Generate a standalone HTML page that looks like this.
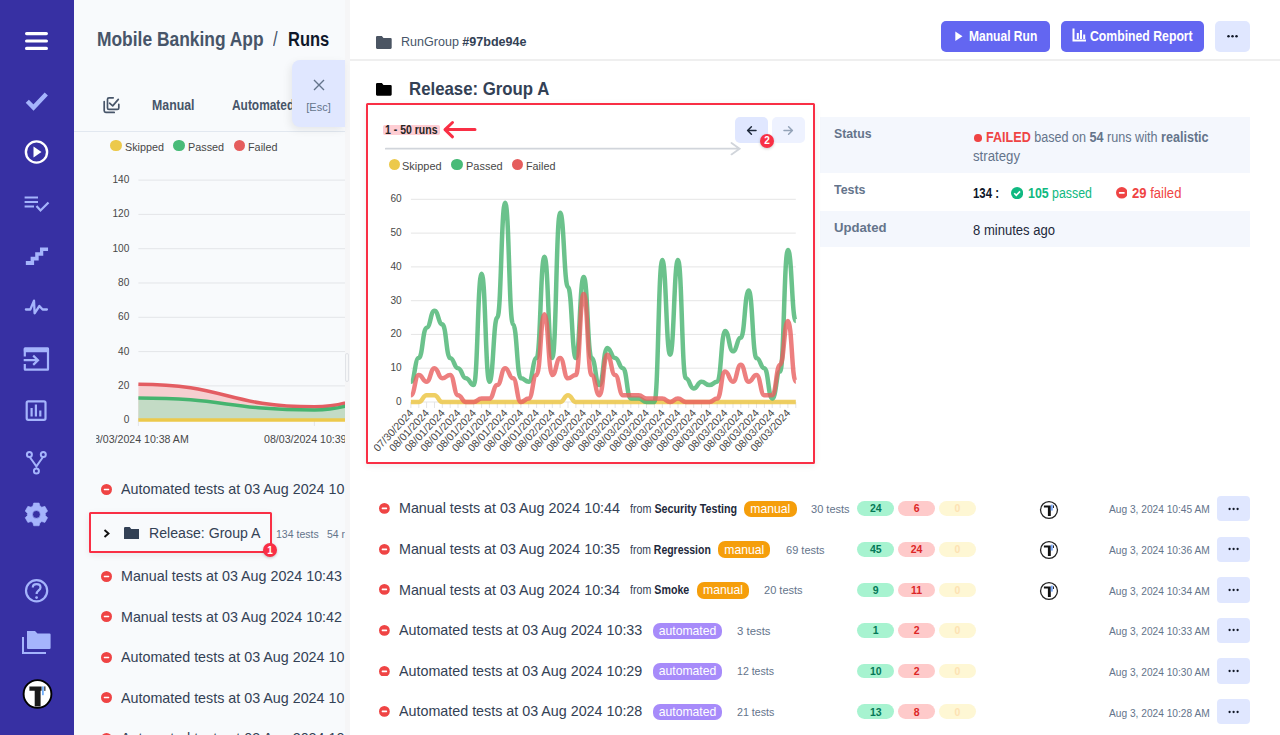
<!DOCTYPE html><html><head><meta charset="utf-8"><style>*{box-sizing:border-box;margin:0;padding:0}
html,body{width:1280px;height:735px;overflow:hidden;background:#fff;font-family:"Liberation Sans",sans-serif;color:#334155;position:relative}
.a{position:absolute;white-space:nowrap;line-height:normal}
.a svg{position:absolute}
.ct{font-family:"Liberation Sans",sans-serif;font-size:11.5px;fill:#484848}
</style></head><body>
<div class="a" style="left:0;top:0;width:74px;height:735px;background:#3730a3"><svg width="74" height="735" viewBox="0 0 74 735" style="left:0;top:0">
<g stroke="#fff" stroke-width="3.2" stroke-linecap="round"><line x1="26.6" y1="33.6" x2="46.4" y2="33.6"/><line x1="26.6" y1="41" x2="46.4" y2="41"/><line x1="26.6" y1="48.4" x2="46.4" y2="48.4"/></g>
<path d="M27.3,101.3 L33.5,107.5 L46.3,94" fill="none" stroke="#a5b4fc" stroke-width="4.4"/>
<circle cx="36.5" cy="152" r="10.6" fill="none" stroke="#fff" stroke-width="2.4"/>
<path d="M33.5,146.5 L41.5,152 L33.5,157.5 Z" fill="#fff"/>
<g stroke="#a5b4fc" stroke-width="2" fill="none"><line x1="24.6" y1="197.5" x2="38" y2="197.5"/><line x1="24.6" y1="202" x2="38" y2="202"/><line x1="24.6" y1="206.5" x2="34" y2="206.5"/><path d="M36.5,206 L40.5,210.5 L48.5,202.5" stroke-width="2.2"/></g>
<path d="M25.84,265.03 L25.84,261.11 L30.62,261.11 L30.62,256.76 L35.2,256.76 L35.2,252.19 L39.98,252.19 L39.98,247.4 L48.04,247.4 L48.04,250.88 L43.25,250.88 L43.25,255.67 L38.68,255.67 L38.68,260.46 L34.1,260.46 L34.1,265.03 Z" fill="#a5b4fc"/>
<path d="M25.9,309.5 L30.3,309.5 L34,300.6 L34.6,313.3 L39.4,306 L42.6,309.5 L46.9,309.5" fill="none" stroke="#a5b4fc" stroke-width="2.3" stroke-linejoin="round" stroke-linecap="round"/>
<path d="M24.8,356.6 L24.8,349 Q24.8,348.6 25.2,348.6 L47.6,348.6 Q48,348.6 48,349 L48,369.3 Q48,369.7 47.6,369.7 L25.2,369.7 Q24.8,369.7 24.8,369.3 L24.8,364" fill="none" stroke="#a5b4fc" stroke-width="2.2"/>
<rect x="23.8" y="347.5" width="25.2" height="4.7" rx="1" fill="#a5b4fc"/>
<path d="M23.7,360.2 L37.6,360.2 M33.2,355.6 L38,360.2 L33.2,364.9" fill="none" stroke="#a5b4fc" stroke-width="2.2"/>
<rect x="26.7" y="401.3" width="18.8" height="18.5" rx="1.5" fill="none" stroke="#a5b4fc" stroke-width="2.2"/>
<g fill="#a5b4fc"><rect x="30.5" y="408" width="2.2" height="8.5"/><rect x="34.8" y="404.5" width="2.2" height="12"/><rect x="39.2" y="410.5" width="2.2" height="6"/></g>
<g fill="none" stroke="#a5b4fc" stroke-width="2"><circle cx="29.4" cy="454.5" r="2.5"/><circle cx="43.3" cy="454.5" r="2.5"/><circle cx="36.4" cy="471" r="2.5"/><path d="M29.7,457 Q33,461.5 36.4,466.4 Q39.8,461.5 43,457"/></g>
<path fill="#a5b4fc" fill-rule="evenodd" stroke="#a5b4fc" stroke-width="0.6" stroke-linejoin="round" d="M32.80,506.26 L33.70,503.02 L39.10,503.02 L40.00,506.26 L41.00,506.43 L41.65,507.21 L44.91,506.37 L47.61,511.05 L45.25,513.45 L45.60,514.40 L45.25,515.35 L47.61,517.75 L44.91,522.43 L41.65,521.59 L41.00,522.37 L40.00,522.54 L39.10,525.78 L33.70,525.78 L32.80,522.54 L31.80,522.37 L31.15,521.59 L27.89,522.43 L25.19,517.75 L27.55,515.35 L27.20,514.40 L27.55,513.45 L25.19,511.05 L27.89,506.37 L31.15,507.21 L31.80,506.43 Z M36.4,510.5 A3.9,3.9 0 1,0 36.4,518.3 A3.9,3.9 0 1,0 36.4,510.5 Z"/>
<circle cx="36.6" cy="590.7" r="10.6" fill="none" stroke="#a5b4fc" stroke-width="2.2"/>
<path d="M32.8,587.5 C32.8,583 40.5,583 40.5,587.5 C40.5,590.5 36.6,590.5 36.6,594" fill="none" stroke="#a5b4fc" stroke-width="2.2"/>
<circle cx="36.6" cy="597.6" r="1.4" fill="#a5b4fc"/>
<path d="M23,637 L23,653 L46,653" fill="none" stroke="#a5b4fc" stroke-width="2"/>
<path d="M27,631 L35,631 L37.5,633.5 L49.5,633.5 Q50.6,633.5 50.6,634.6 L50.6,648 Q50.6,649 49.5,649 L28,649 Q27,649 27,648 Z" fill="#a5b4fc"/>
<circle cx="37.5" cy="694" r="13.9" fill="#fff" stroke="#000" stroke-width="1.9"/>
<path d="M29.4,686.4 L41.6,686.4 L41.6,690.8 L40.6,690.8 L40.6,706.5 L34.7,706.5 L34.7,690.8 L29.4,690.8 Z" fill="#1a1a1a"/>
<rect x="42.1" y="686.4" width="1.6" height="8.8" fill="#60a5fa"/>
<rect x="44.3" y="686.4" width="1.1" height="4.5" fill="#1a1a1a"/>
</svg></div>
<div class="a" style="left:74px;top:0;width:276px;height:735px;background:#f8fafc"></div>
<div class="a" style="left:74px;top:0;width:271px;height:735px;overflow:hidden"><div class="a" style="left:-74px;top:0;width:1280px;height:735px">
<div class="a" style="left:74px;top:130.5px;width:271px;height:1px;background:#e2e8f0"></div>
<div class="a" style="left:110.4px;top:140.3px;width:11.2px;height:11.2px;border-radius:50%;background:#ecc94b"></div>
<div class="a" style="left:173.4px;top:140.3px;width:11.2px;height:11.2px;border-radius:50%;background:#48bb78"></div>
<div class="a" style="left:233.6px;top:140.3px;width:11.2px;height:11.2px;border-radius:50%;background:#e55d5d"></div>
<svg class="a" style="left:0;top:0" width="200" height="130"><g fill="none" stroke="#475569" stroke-width="1.7" stroke-linecap="round" stroke-linejoin="round"><path d="M104.2,101.6 L104.2,110.8 Q104.2,112.4 105.8,112.4 L114.2,112.4"/><path d="M113.2,97.8 L109,97.8 Q107.5,97.8 107.5,99.3 L107.5,107.9 Q107.5,109.4 109,109.4 L117.3,109.4 Q118.8,109.4 118.8,107.9 L118.8,104.3"/><path d="M109.6,103.2 L112.7,105.9 L118.3,99.4"/></g></svg>
<svg width="1280" height="735" style="position:absolute;left:0;top:0">
<defs><clipPath id="lc"><rect x="96.3" y="160" width="249" height="300"/></clipPath><clipPath id="lp"><rect x="138" y="160" width="207" height="262"/></clipPath></defs>
<line x1="138.4" x2="345" y1="420.2" y2="420.2" stroke="#e3e5e8" stroke-width="1"/>
<text x="129.3" y="423.2" text-anchor="end" class="ct" style="font-size:10.1px">0</text>
<line x1="138.4" x2="345" y1="385.9" y2="385.9" stroke="#e3e5e8" stroke-width="1"/>
<text x="129.3" y="388.9" text-anchor="end" class="ct" style="font-size:10.1px">20</text>
<line x1="138.4" x2="345" y1="351.6" y2="351.6" stroke="#e3e5e8" stroke-width="1"/>
<text x="129.3" y="354.6" text-anchor="end" class="ct" style="font-size:10.1px">40</text>
<line x1="138.4" x2="345" y1="317.3" y2="317.3" stroke="#e3e5e8" stroke-width="1"/>
<text x="129.3" y="320.3" text-anchor="end" class="ct" style="font-size:10.1px">60</text>
<line x1="138.4" x2="345" y1="283.0" y2="283.0" stroke="#e3e5e8" stroke-width="1"/>
<text x="129.3" y="286.0" text-anchor="end" class="ct" style="font-size:10.1px">80</text>
<line x1="138.4" x2="345" y1="248.7" y2="248.7" stroke="#e3e5e8" stroke-width="1"/>
<text x="129.3" y="251.7" text-anchor="end" class="ct" style="font-size:10.1px">100</text>
<line x1="138.4" x2="345" y1="214.4" y2="214.4" stroke="#e3e5e8" stroke-width="1"/>
<text x="129.3" y="217.4" text-anchor="end" class="ct" style="font-size:10.1px">120</text>
<line x1="138.4" x2="345" y1="180.1" y2="180.1" stroke="#e3e5e8" stroke-width="1"/>
<text x="129.3" y="183.1" text-anchor="end" class="ct" style="font-size:10.1px">140</text>
<line x1="138.4" x2="138.4" y1="420" y2="426" stroke="#e3e5e8" stroke-width="1"/>
<line x1="314.4" x2="314.4" y1="420" y2="426" stroke="#e3e5e8" stroke-width="1"/>
<g clip-path="url(#lp)">
<path d="M138.40,384.19 C226.40,384.19 226.40,406.82 314.40,406.82 C402.40,406.82 402.40,329.31 490.40,329.31 L490.4,420.2 L138.4,420.2 Z" fill="#f6cfd0"/>
<path d="M138.40,397.90 C226.40,397.90 226.40,409.91 314.40,409.91 C402.40,409.91 402.40,332.74 490.40,332.74 L490.4,420.2 L138.4,420.2 Z" fill="#c3dbc5"/>
<path d="M138.40,384.19 C226.40,384.19 226.40,406.82 314.40,406.82 C402.40,406.82 402.40,329.31 490.40,329.31" fill="none" stroke="#e35d62" stroke-width="3.5"/>
<path d="M138.40,397.90 C226.40,397.90 226.40,409.91 314.40,409.91 C402.40,409.91 402.40,332.74 490.40,332.74" fill="none" stroke="#45b46f" stroke-width="3.5"/>
<line x1="138.4" x2="345" y1="420" y2="420" stroke="#ecc94b" stroke-width="3.5"/>
</g>
<g clip-path="url(#lc)">
<text x="138.4" y="443.3" text-anchor="middle" class="ct" style="font-size:10.6px">08/03/2024 10:38 AM</text>
<text x="314.4" y="443.3" text-anchor="middle" class="ct" style="font-size:10.6px">08/03/2024 10:39 AM</text>
</g></svg>
<svg class="a" style="left:101.30px;top:484.20px" width="11" height="11" viewBox="0 0 12 12"><circle cx="6" cy="6" r="6" fill="#ef4444"/><rect x="3" y="5.1" width="6" height="1.8" rx="0.5" fill="#fff"/></svg>
<svg class="a" style="left:101.30px;top:570.70px" width="11" height="11" viewBox="0 0 12 12"><circle cx="6" cy="6" r="6" fill="#ef4444"/><rect x="3" y="5.1" width="6" height="1.8" rx="0.5" fill="#fff"/></svg>
<svg class="a" style="left:101.30px;top:611.20px" width="11" height="11" viewBox="0 0 12 12"><circle cx="6" cy="6" r="6" fill="#ef4444"/><rect x="3" y="5.1" width="6" height="1.8" rx="0.5" fill="#fff"/></svg>
<svg class="a" style="left:101.30px;top:651.80px" width="11" height="11" viewBox="0 0 12 12"><circle cx="6" cy="6" r="6" fill="#ef4444"/><rect x="3" y="5.1" width="6" height="1.8" rx="0.5" fill="#fff"/></svg>
<svg class="a" style="left:101.30px;top:692.40px" width="11" height="11" viewBox="0 0 12 12"><circle cx="6" cy="6" r="6" fill="#ef4444"/><rect x="3" y="5.1" width="6" height="1.8" rx="0.5" fill="#fff"/></svg>
<svg class="a" style="left:101.30px;top:733.00px" width="11" height="11" viewBox="0 0 12 12"><circle cx="6" cy="6" r="6" fill="#ef4444"/><rect x="3" y="5.1" width="6" height="1.8" rx="0.5" fill="#fff"/></svg>
<svg class="a" style="left:102.5px;top:529px" width="8" height="9" viewBox="0 0 8 9"><path d="M1.5,1 L5.5,4.5 L1.5,8" fill="none" stroke="#111" stroke-width="1.9"/></svg>
<svg class="a" style="left:123.8px;top:526.5px" width="15.7" height="12.5" viewBox="0 0 16 12.7"><path d="M0,1.2 Q0,0 1.2,0 L5.8,0 L7.4,1.9 L14.8,1.9 Q16,1.9 16,3.1 L16,11.5 Q16,12.7 14.8,12.7 L1.2,12.7 Q0,12.7 0,11.5 Z" fill="#334155"/></svg>
<div class="a" style="left:345px;top:0;width:5px;height:735px;background:#f6f6f7"></div>
<div class="a" style="left:345.3px;top:352.7px;width:4px;height:29.2px;border:1px solid #e1e3e7;border-radius:2px;background:#f6f7f8"></div>
<div class="a" style="left:97.00px;top:28.00px;font-size:20px;font-weight:700;color:#475569;letter-spacing:0px;transform:scaleX(0.8700);transform-origin:left 0;">Mobile Banking App</div>
<div class="a" style="left:273.20px;top:28.00px;font-size:20px;font-weight:400;color:#475569;letter-spacing:0px;transform:scaleX(0.8270);transform-origin:left 0;">/</div>
<div class="a" style="left:288.00px;top:28.00px;font-size:20px;font-weight:700;color:#0f172a;letter-spacing:0px;transform:scaleX(0.8240);transform-origin:left 0;">Runs</div>
<div class="a" style="left:152.30px;top:97.00px;font-size:14.5px;font-weight:700;color:#475569;letter-spacing:0px;transform:scaleX(0.8508);transform-origin:left 0;">Manual</div>
<div class="a" style="left:232.00px;top:97.00px;font-size:14.5px;font-weight:700;color:#475569;letter-spacing:0px;transform:scaleX(0.8220);transform-origin:left 0;">Automated</div>
<div class="a" style="left:124.80px;top:140.00px;font-size:11.8px;font-weight:400;color:#474747;letter-spacing:0px;transform:scaleX(0.9123);transform-origin:left 0;">Skipped</div>
<div class="a" style="left:187.80px;top:140.00px;font-size:11.8px;font-weight:400;color:#474747;letter-spacing:0px;transform:scaleX(0.9172);transform-origin:left 0;">Passed</div>
<div class="a" style="left:248.00px;top:140.00px;font-size:11.8px;font-weight:400;color:#474747;letter-spacing:0px;transform:scaleX(0.9178);transform-origin:left 0;">Failed</div>
<div class="a" style="left:121.00px;top:481.00px;font-size:14.5px;font-weight:400;color:#334155;letter-spacing:0px;transform:scaleX(0.9861);transform-origin:left 0;">Automated tests at 03 Aug 2024 10:38</div>
<div class="a" style="left:121.00px;top:568.00px;font-size:14.5px;font-weight:400;color:#334155;letter-spacing:0px;transform:scaleX(0.9861);transform-origin:left 0;">Manual tests at 03 Aug 2024 10:43</div>
<div class="a" style="left:121.00px;top:609.00px;font-size:14.5px;font-weight:400;color:#334155;letter-spacing:0px;transform:scaleX(0.9861);transform-origin:left 0;">Manual tests at 03 Aug 2024 10:42</div>
<div class="a" style="left:121.00px;top:649.00px;font-size:14.5px;font-weight:400;color:#334155;letter-spacing:0px;transform:scaleX(0.9861);transform-origin:left 0;">Automated tests at 03 Aug 2024 10:41</div>
<div class="a" style="left:121.00px;top:690.00px;font-size:14.5px;font-weight:400;color:#334155;letter-spacing:0px;transform:scaleX(0.9861);transform-origin:left 0;">Automated tests at 03 Aug 2024 10:40</div>
<div class="a" style="left:121.00px;top:730.00px;font-size:14.5px;font-weight:400;color:#334155;letter-spacing:0px;transform:scaleX(0.9861);transform-origin:left 0;">Automated tests at 03 Aug 2024 10:39</div>
<div class="a" style="left:149.00px;top:524.00px;font-size:15.5px;font-weight:400;color:#334155;letter-spacing:0px;transform:scaleX(0.9113);transform-origin:left 0;">Release: Group A</div>
<div class="a" style="left:275.80px;top:528.00px;font-size:11.5px;font-weight:400;color:#64748b;letter-spacing:0px;transform:scaleX(0.9149);transform-origin:left 0;">134 tests</div>
<div class="a" style="left:326.60px;top:528.00px;font-size:11.5px;font-weight:400;color:#64748b;letter-spacing:0px;transform:scaleX(0.9124);transform-origin:left 0;">54 runs</div>
</div></div>
<div class="a" style="left:345px;top:0;width:5px;height:735px;background:#f6f6f7"></div><div class="a" style="left:345.3px;top:352.7px;width:4px;height:29.2px;border:1px solid #e1e3e7;border-radius:2px;background:#f6f7f8"></div>
<svg class="a" style="left:376px;top:35.6px" width="15.7" height="13" viewBox="0 0 16 13.5" preserveAspectRatio="none"><path d="M0,1.2 Q0,0 1.2,0 L6,0 L7.6,2 L14.8,2 Q16,2 16,3.2 L16,12.3 Q16,13.5 14.8,13.5 L1.2,13.5 Q0,13.5 0,12.3 Z" fill="#4b5563"/></svg>
<div class="a" style="left:350px;top:59px;width:930px;height:1.5px;background:#efefef"></div>
<div class="a" style="left:940.6px;top:20.6px;width:109.4px;height:31.4px;border-radius:5px;background:#6366f1"></div>
<div class="a" style="left:1061.2px;top:20.6px;width:142.8px;height:31.4px;border-radius:5px;background:#6366f1"></div>
<div class="a" style="left:1215px;top:20.6px;width:35px;height:31.4px;border-radius:5px;background:#e0e7ff"></div>
<svg class="a" style="left:0;top:0" width="1280" height="60"><path d="M955.3,31.5 L962.5,36.3 L955.3,41.1 Z" fill="#fff"/><path d="M1073.5,28.5 L1073.5,40.5 L1086,40.5" fill="none" stroke="#fff" stroke-width="2"/><rect x="1076.8" y="33" width="2" height="6" fill="#fff"/><rect x="1080" y="30" width="2" height="9" fill="#fff"/><rect x="1083.2" y="34.5" width="2" height="4.5" fill="#fff"/><g fill="#111827"><circle cx="1228.5" cy="36.3" r="1.25"/><circle cx="1232.5" cy="36.3" r="1.25"/><circle cx="1236.5" cy="36.3" r="1.25"/></g></svg>
<svg class="a" style="left:376px;top:83.3px" width="15.7" height="12.7" viewBox="0 0 16 13.5" preserveAspectRatio="none"><path d="M0,1.2 Q0,0 1.2,0 L6,0 L7.6,2 L14.8,2 Q16,2 16,3.2 L16,12.3 Q16,13.5 14.8,13.5 L1.2,13.5 Q0,13.5 0,12.3 Z" fill="#000"/></svg>
<div class="a" style="left:820px;top:117.2px;width:430px;height:55.4px;background:#f4f7fd"></div>
<div class="a" style="left:820px;top:210.8px;width:430px;height:36.5px;background:#f4f7fd"></div>
<div class="a" style="left:974.1px;top:134.1px;width:7.6px;height:7.6px;border-radius:50%;background:#ef4444"></div>
<svg class="a" style="left:1011.2px;top:186.7px" width="12.2" height="12.2" viewBox="0 0 12 12"><circle cx="6" cy="6" r="6" fill="#10b981"/><path d="M3.2,6.2 L5.2,8.2 L8.9,4.3" fill="none" stroke="#fff" stroke-width="1.6"/></svg>
<svg class="a" style="left:1115.50px;top:187.00px" width="11.6" height="11.6" viewBox="0 0 12 12"><circle cx="6" cy="6" r="6" fill="#ef4444"/><rect x="3" y="5.1" width="6" height="1.8" rx="0.5" fill="#fff"/></svg>
<svg class="a" style="left:379.35px;top:503.20px" width="10.8" height="10.8" viewBox="0 0 12 12"><circle cx="6" cy="6" r="6" fill="#ef4444"/><rect x="3" y="5.1" width="6" height="1.8" rx="0.5" fill="#fff"/></svg>
<div class="a" style="left:743.9px;top:500.7px;width:52.8px;height:16.7px;border-radius:7px;background:#f59e0b"></div>
<div class="a" style="left:857.1px;top:501.3px;width:37.3px;height:14.7px;border-radius:7.4px;background:#a7f3d0"></div>
<div class="a" style="left:898.1px;top:501.3px;width:36.9px;height:14.7px;border-radius:7.4px;background:#fecaca"></div>
<div class="a" style="left:939px;top:501.3px;width:36.6px;height:14.7px;border-radius:7.4px;background:#fef7d4"></div>
<svg class="a" style="left:1039.1px;top:499.6px" width="20" height="20" viewBox="0 0 20 20"><circle cx="10" cy="10" r="8.45" fill="#fff" stroke="#222" stroke-width="1.3"/><path d="M4.9,5.4 L11.8,5.4 L11.8,16.1 L8.9,16.1 L8.9,7.5 L4.9,7.5 Z" fill="#111"/><rect x="11.8" y="4.6" width="2" height="6" fill="#7aa7f7"/><rect x="14.1" y="5.4" width="0.9" height="2.6" fill="#111"/></svg>
<div class="a" style="left:1217.2px;top:495.9px;width:32.9px;height:25.5px;border-radius:4px;background:#e0e7ff"></div>
<svg class="a" style="left:1228px;top:506.6px" width="12" height="4"><g fill="#111827"><circle cx="1.6" cy="2" r="1.15"/><circle cx="5.6" cy="2" r="1.15"/><circle cx="9.6" cy="2" r="1.15"/></g></svg>
<svg class="a" style="left:379.35px;top:543.80px" width="10.8" height="10.8" viewBox="0 0 12 12"><circle cx="6" cy="6" r="6" fill="#ef4444"/><rect x="3" y="5.1" width="6" height="1.8" rx="0.5" fill="#fff"/></svg>
<div class="a" style="left:718.2px;top:541.3px;width:52.1px;height:16.7px;border-radius:7px;background:#f59e0b"></div>
<div class="a" style="left:857.1px;top:541.9px;width:37.3px;height:14.7px;border-radius:7.4px;background:#a7f3d0"></div>
<div class="a" style="left:898.1px;top:541.9px;width:36.9px;height:14.7px;border-radius:7.4px;background:#fecaca"></div>
<div class="a" style="left:939px;top:541.9px;width:36.6px;height:14.7px;border-radius:7.4px;background:#fef7d4"></div>
<svg class="a" style="left:1039.1px;top:540.2px" width="20" height="20" viewBox="0 0 20 20"><circle cx="10" cy="10" r="8.45" fill="#fff" stroke="#222" stroke-width="1.3"/><path d="M4.9,5.4 L11.8,5.4 L11.8,16.1 L8.9,16.1 L8.9,7.5 L4.9,7.5 Z" fill="#111"/><rect x="11.8" y="4.6" width="2" height="6" fill="#7aa7f7"/><rect x="14.1" y="5.4" width="0.9" height="2.6" fill="#111"/></svg>
<div class="a" style="left:1217.2px;top:536.5px;width:32.9px;height:25.5px;border-radius:4px;background:#e0e7ff"></div>
<svg class="a" style="left:1228px;top:547.2px" width="12" height="4"><g fill="#111827"><circle cx="1.6" cy="2" r="1.15"/><circle cx="5.6" cy="2" r="1.15"/><circle cx="9.6" cy="2" r="1.15"/></g></svg>
<svg class="a" style="left:379.35px;top:584.40px" width="10.8" height="10.8" viewBox="0 0 12 12"><circle cx="6" cy="6" r="6" fill="#ef4444"/><rect x="3" y="5.1" width="6" height="1.8" rx="0.5" fill="#fff"/></svg>
<div class="a" style="left:697.0px;top:581.9px;width:52.2px;height:16.7px;border-radius:7px;background:#f59e0b"></div>
<div class="a" style="left:857.1px;top:582.5px;width:37.3px;height:14.7px;border-radius:7.4px;background:#a7f3d0"></div>
<div class="a" style="left:898.1px;top:582.5px;width:36.9px;height:14.7px;border-radius:7.4px;background:#fecaca"></div>
<div class="a" style="left:939px;top:582.5px;width:36.6px;height:14.7px;border-radius:7.4px;background:#fef7d4"></div>
<svg class="a" style="left:1039.1px;top:580.8px" width="20" height="20" viewBox="0 0 20 20"><circle cx="10" cy="10" r="8.45" fill="#fff" stroke="#222" stroke-width="1.3"/><path d="M4.9,5.4 L11.8,5.4 L11.8,16.1 L8.9,16.1 L8.9,7.5 L4.9,7.5 Z" fill="#111"/><rect x="11.8" y="4.6" width="2" height="6" fill="#7aa7f7"/><rect x="14.1" y="5.4" width="0.9" height="2.6" fill="#111"/></svg>
<div class="a" style="left:1217.2px;top:577.1px;width:32.9px;height:25.5px;border-radius:4px;background:#e0e7ff"></div>
<svg class="a" style="left:1228px;top:587.8px" width="12" height="4"><g fill="#111827"><circle cx="1.6" cy="2" r="1.15"/><circle cx="5.6" cy="2" r="1.15"/><circle cx="9.6" cy="2" r="1.15"/></g></svg>
<svg class="a" style="left:379.35px;top:625.00px" width="10.8" height="10.8" viewBox="0 0 12 12"><circle cx="6" cy="6" r="6" fill="#ef4444"/><rect x="3" y="5.1" width="6" height="1.8" rx="0.5" fill="#fff"/></svg>
<div class="a" style="left:652.8px;top:622.5px;width:69.4px;height:16.7px;border-radius:7px;background:#a78bfa"></div>
<div class="a" style="left:857.1px;top:623.1px;width:37.3px;height:14.7px;border-radius:7.4px;background:#a7f3d0"></div>
<div class="a" style="left:898.1px;top:623.1px;width:36.9px;height:14.7px;border-radius:7.4px;background:#fecaca"></div>
<div class="a" style="left:939px;top:623.1px;width:36.6px;height:14.7px;border-radius:7.4px;background:#fef7d4"></div>
<div class="a" style="left:1217.2px;top:617.7px;width:32.9px;height:25.5px;border-radius:4px;background:#e0e7ff"></div>
<svg class="a" style="left:1228px;top:628.4px" width="12" height="4"><g fill="#111827"><circle cx="1.6" cy="2" r="1.15"/><circle cx="5.6" cy="2" r="1.15"/><circle cx="9.6" cy="2" r="1.15"/></g></svg>
<svg class="a" style="left:379.35px;top:665.60px" width="10.8" height="10.8" viewBox="0 0 12 12"><circle cx="6" cy="6" r="6" fill="#ef4444"/><rect x="3" y="5.1" width="6" height="1.8" rx="0.5" fill="#fff"/></svg>
<div class="a" style="left:652.8px;top:663.1px;width:69.4px;height:16.7px;border-radius:7px;background:#a78bfa"></div>
<div class="a" style="left:857.1px;top:663.7px;width:37.3px;height:14.7px;border-radius:7.4px;background:#a7f3d0"></div>
<div class="a" style="left:898.1px;top:663.7px;width:36.9px;height:14.7px;border-radius:7.4px;background:#fecaca"></div>
<div class="a" style="left:939px;top:663.7px;width:36.6px;height:14.7px;border-radius:7.4px;background:#fef7d4"></div>
<div class="a" style="left:1217.2px;top:658.3px;width:32.9px;height:25.5px;border-radius:4px;background:#e0e7ff"></div>
<svg class="a" style="left:1228px;top:669.0px" width="12" height="4"><g fill="#111827"><circle cx="1.6" cy="2" r="1.15"/><circle cx="5.6" cy="2" r="1.15"/><circle cx="9.6" cy="2" r="1.15"/></g></svg>
<svg class="a" style="left:379.35px;top:706.20px" width="10.8" height="10.8" viewBox="0 0 12 12"><circle cx="6" cy="6" r="6" fill="#ef4444"/><rect x="3" y="5.1" width="6" height="1.8" rx="0.5" fill="#fff"/></svg>
<div class="a" style="left:652.8px;top:703.7px;width:69.4px;height:16.7px;border-radius:7px;background:#a78bfa"></div>
<div class="a" style="left:857.1px;top:704.3px;width:37.3px;height:14.7px;border-radius:7.4px;background:#a7f3d0"></div>
<div class="a" style="left:898.1px;top:704.3px;width:36.9px;height:14.7px;border-radius:7.4px;background:#fecaca"></div>
<div class="a" style="left:939px;top:704.3px;width:36.6px;height:14.7px;border-radius:7.4px;background:#fef7d4"></div>
<div class="a" style="left:1217.2px;top:698.9px;width:32.9px;height:25.5px;border-radius:4px;background:#e0e7ff"></div>
<svg class="a" style="left:1228px;top:709.6px" width="12" height="4"><g fill="#111827"><circle cx="1.6" cy="2" r="1.15"/><circle cx="5.6" cy="2" r="1.15"/><circle cx="9.6" cy="2" r="1.15"/></g></svg>
<div class="a" style="left:401.40px;top:34.00px;font-size:13.6px;font-weight:400;color:#475569;letter-spacing:0px;transform:scaleX(0.9226);transform-origin:left 0;">RunGroup <b style="color:#334155">#97bde94e</b></div>
<div class="a" style="left:969.30px;top:28.00px;font-size:14.5px;font-weight:700;color:#fff;letter-spacing:0px;transform:scaleX(0.8312);transform-origin:left 0;">Manual Run</div>
<div class="a" style="left:1089.50px;top:28.00px;font-size:14.5px;font-weight:700;color:#fff;letter-spacing:0px;transform:scaleX(0.8443);transform-origin:left 0;">Combined Report</div>
<div class="a" style="left:408.75px;top:78.00px;font-size:18.5px;font-weight:700;color:#334155;letter-spacing:0px;transform:scaleX(0.9077);transform-origin:left 0;">Release: Group A</div>
<div class="a" style="left:834.40px;top:126.00px;font-size:13.6px;font-weight:700;color:#64748b;letter-spacing:0px;transform:scaleX(0.9026);transform-origin:left 0;">Status</div>
<div class="a" style="left:834.40px;top:182.00px;font-size:13.6px;font-weight:700;color:#64748b;letter-spacing:0px;transform:scaleX(0.9126);transform-origin:left 0;">Tests</div>
<div class="a" style="left:834.40px;top:220.00px;font-size:13.6px;font-weight:700;color:#64748b;letter-spacing:0px;transform:scaleX(0.9655);transform-origin:left 0;">Updated</div>
<div class="a" style="left:986.40px;top:130.00px;font-size:13.8px;font-weight:400;color:#64748b;letter-spacing:0px;transform:scaleX(0.9127);transform-origin:left 0;"><b style="color:#ef4444">FAILED</b> based on <b>54</b> runs with <b>realistic</b></div>
<div class="a" style="left:973.00px;top:149.00px;font-size:13.8px;font-weight:400;color:#64748b;letter-spacing:0px;transform:scaleX(0.9577);transform-origin:left 0;">strategy</div>
<div class="a" style="left:973.00px;top:186.00px;font-size:13.8px;font-weight:700;color:#0f172a;letter-spacing:0px;transform:scaleX(0.8266);transform-origin:left 0;">134 :</div>
<div class="a" style="left:1027.70px;top:186.00px;font-size:13.8px;font-weight:400;color:#10b981;letter-spacing:0px;transform:scaleX(0.8969);transform-origin:left 0;"><b>105</b> passed</div>
<div class="a" style="left:1131.70px;top:186.00px;font-size:13.8px;font-weight:400;color:#ef4444;letter-spacing:0px;transform:scaleX(0.9466);transform-origin:left 0;"><b>29</b> failed</div>
<div class="a" style="left:973.00px;top:223.00px;font-size:13.8px;font-weight:400;color:#1e293b;letter-spacing:0px;transform:scaleX(0.9461);transform-origin:left 0;">8 minutes ago</div>
<div class="a" style="left:399.30px;top:500.00px;font-size:14.5px;font-weight:400;color:#334155;letter-spacing:0px;transform:scaleX(0.9861);transform-origin:left 0;">Manual tests at 03 Aug 2024 10:44</div>
<div class="a" style="left:629.50px;top:502.00px;font-size:12px;font-weight:400;color:#334155;letter-spacing:0px;transform:scaleX(0.8939);transform-origin:left 0;">from <b style="color:#1e293b">Security Testing</b></div>
<div class="a" style="left:670.30px;width:200px;text-align:center;top:502.00px;font-size:12.2px;font-weight:400;color:#fff;letter-spacing:0px;">manual</div>
<div class="a" style="left:811.40px;top:502.00px;font-size:11.8px;font-weight:400;color:#64748b;letter-spacing:0px;transform:scaleX(0.9343);transform-origin:left 0;">30 tests</div>
<div class="a" style="left:775.75px;width:200px;text-align:center;top:502.00px;font-size:10.5px;font-weight:700;color:#047857;letter-spacing:0px;">24</div>
<div class="a" style="left:816.55px;width:200px;text-align:center;top:502.00px;font-size:10.5px;font-weight:700;color:#dc2626;letter-spacing:0px;">6</div>
<div class="a" style="left:857.30px;width:200px;text-align:center;top:502.00px;font-size:10.5px;font-weight:700;color:#fde2b3;letter-spacing:0px;">0</div>
<div class="a" style="right:70.70px;top:502.00px;font-size:11.6px;font-weight:400;color:#64748b;letter-spacing:0px;transform:scaleX(0.8784);transform-origin:right 0;">Aug 3, 2024 10:45 AM</div>
<div class="a" style="left:399.30px;top:541.00px;font-size:14.5px;font-weight:400;color:#334155;letter-spacing:0px;transform:scaleX(0.9861);transform-origin:left 0;">Manual tests at 03 Aug 2024 10:35</div>
<div class="a" style="left:629.50px;top:543.00px;font-size:12px;font-weight:400;color:#334155;letter-spacing:0px;transform:scaleX(0.8716);transform-origin:left 0;">from <b style="color:#1e293b">Regression</b></div>
<div class="a" style="left:644.25px;width:200px;text-align:center;top:543.00px;font-size:12.2px;font-weight:400;color:#fff;letter-spacing:0px;">manual</div>
<div class="a" style="left:785.80px;top:543.00px;font-size:11.8px;font-weight:400;color:#64748b;letter-spacing:0px;transform:scaleX(0.9343);transform-origin:left 0;">69 tests</div>
<div class="a" style="left:775.75px;width:200px;text-align:center;top:543.00px;font-size:10.5px;font-weight:700;color:#047857;letter-spacing:0px;">45</div>
<div class="a" style="left:816.55px;width:200px;text-align:center;top:543.00px;font-size:10.5px;font-weight:700;color:#dc2626;letter-spacing:0px;">24</div>
<div class="a" style="left:857.30px;width:200px;text-align:center;top:543.00px;font-size:10.5px;font-weight:700;color:#fde2b3;letter-spacing:0px;">0</div>
<div class="a" style="right:70.70px;top:543.00px;font-size:11.6px;font-weight:400;color:#64748b;letter-spacing:0px;transform:scaleX(0.8784);transform-origin:right 0;">Aug 3, 2024 10:36 AM</div>
<div class="a" style="left:399.30px;top:582.00px;font-size:14.5px;font-weight:400;color:#334155;letter-spacing:0px;transform:scaleX(0.9861);transform-origin:left 0;">Manual tests at 03 Aug 2024 10:34</div>
<div class="a" style="left:629.50px;top:583.00px;font-size:12px;font-weight:400;color:#334155;letter-spacing:0px;transform:scaleX(0.8890);transform-origin:left 0;">from <b style="color:#1e293b">Smoke</b></div>
<div class="a" style="left:623.10px;width:200px;text-align:center;top:583.00px;font-size:12.2px;font-weight:400;color:#fff;letter-spacing:0px;">manual</div>
<div class="a" style="left:764.20px;top:583.00px;font-size:11.8px;font-weight:400;color:#64748b;letter-spacing:0px;transform:scaleX(0.9343);transform-origin:left 0;">20 tests</div>
<div class="a" style="left:775.75px;width:200px;text-align:center;top:584.00px;font-size:10.5px;font-weight:700;color:#047857;letter-spacing:0px;">9</div>
<div class="a" style="left:816.55px;width:200px;text-align:center;top:584.00px;font-size:10.5px;font-weight:700;color:#dc2626;letter-spacing:0px;">11</div>
<div class="a" style="left:857.30px;width:200px;text-align:center;top:584.00px;font-size:10.5px;font-weight:700;color:#fde2b3;letter-spacing:0px;">0</div>
<div class="a" style="right:70.70px;top:584.00px;font-size:11.6px;font-weight:400;color:#64748b;letter-spacing:0px;transform:scaleX(0.8784);transform-origin:right 0;">Aug 3, 2024 10:34 AM</div>
<div class="a" style="left:399.30px;top:622.00px;font-size:14.5px;font-weight:400;color:#334155;letter-spacing:0px;transform:scaleX(0.9861);transform-origin:left 0;">Automated tests at 03 Aug 2024 10:33</div>
<div class="a" style="left:587.50px;width:200px;text-align:center;top:624.00px;font-size:12.2px;font-weight:400;color:#fff;letter-spacing:0px;">automated</div>
<div class="a" style="left:737.30px;top:624.00px;font-size:11.8px;font-weight:400;color:#64748b;letter-spacing:0px;transform:scaleX(0.9636);transform-origin:left 0;">3 tests</div>
<div class="a" style="left:775.75px;width:200px;text-align:center;top:624.00px;font-size:10.5px;font-weight:700;color:#047857;letter-spacing:0px;">1</div>
<div class="a" style="left:816.55px;width:200px;text-align:center;top:624.00px;font-size:10.5px;font-weight:700;color:#dc2626;letter-spacing:0px;">2</div>
<div class="a" style="left:857.30px;width:200px;text-align:center;top:624.00px;font-size:10.5px;font-weight:700;color:#fde2b3;letter-spacing:0px;">0</div>
<div class="a" style="right:70.70px;top:624.00px;font-size:11.6px;font-weight:400;color:#64748b;letter-spacing:0px;transform:scaleX(0.8784);transform-origin:right 0;">Aug 3, 2024 10:33 AM</div>
<div class="a" style="left:399.30px;top:663.00px;font-size:14.5px;font-weight:400;color:#334155;letter-spacing:0px;transform:scaleX(0.9861);transform-origin:left 0;">Automated tests at 03 Aug 2024 10:29</div>
<div class="a" style="left:587.50px;width:200px;text-align:center;top:664.00px;font-size:12.2px;font-weight:400;color:#fff;letter-spacing:0px;">automated</div>
<div class="a" style="left:737.30px;top:664.00px;font-size:11.8px;font-weight:400;color:#64748b;letter-spacing:0px;transform:scaleX(0.8956);transform-origin:left 0;">12 tests</div>
<div class="a" style="left:775.75px;width:200px;text-align:center;top:665.00px;font-size:10.5px;font-weight:700;color:#047857;letter-spacing:0px;">10</div>
<div class="a" style="left:816.55px;width:200px;text-align:center;top:665.00px;font-size:10.5px;font-weight:700;color:#dc2626;letter-spacing:0px;">2</div>
<div class="a" style="left:857.30px;width:200px;text-align:center;top:665.00px;font-size:10.5px;font-weight:700;color:#fde2b3;letter-spacing:0px;">0</div>
<div class="a" style="right:70.70px;top:665.00px;font-size:11.6px;font-weight:400;color:#64748b;letter-spacing:0px;transform:scaleX(0.8784);transform-origin:right 0;">Aug 3, 2024 10:30 AM</div>
<div class="a" style="left:399.30px;top:703.00px;font-size:14.5px;font-weight:400;color:#334155;letter-spacing:0px;transform:scaleX(0.9861);transform-origin:left 0;">Automated tests at 03 Aug 2024 10:28</div>
<div class="a" style="left:587.50px;width:200px;text-align:center;top:705.00px;font-size:12.2px;font-weight:400;color:#fff;letter-spacing:0px;">automated</div>
<div class="a" style="left:737.30px;top:705.00px;font-size:11.8px;font-weight:400;color:#64748b;letter-spacing:0px;transform:scaleX(0.9053);transform-origin:left 0;">21 tests</div>
<div class="a" style="left:775.75px;width:200px;text-align:center;top:706.00px;font-size:10.5px;font-weight:700;color:#047857;letter-spacing:0px;">13</div>
<div class="a" style="left:816.55px;width:200px;text-align:center;top:706.00px;font-size:10.5px;font-weight:700;color:#dc2626;letter-spacing:0px;">8</div>
<div class="a" style="left:857.30px;width:200px;text-align:center;top:706.00px;font-size:10.5px;font-weight:700;color:#fde2b3;letter-spacing:0px;">0</div>
<div class="a" style="right:70.70px;top:706.00px;font-size:11.6px;font-weight:400;color:#64748b;letter-spacing:0px;transform:scaleX(0.8784);transform-origin:right 0;">Aug 3, 2024 10:28 AM</div>
<div class="a" style="left:368px;top:105px;width:445px;height:357px;background:#fff"></div>
<div class="a" style="left:383.2px;top:124.8px;width:56.8px;height:10.2px;background:#fecdd3;border-radius:2px"></div>
<svg class="a" style="left:0;top:0" width="1280" height="735"><g fill="none" stroke="#f92f45" stroke-width="3" stroke-linecap="round" stroke-linejoin="round"><path d="M446,129.6 L475,129.6 M452.5,122.5 L445,129.6 L452.5,136.8"/></g><g fill="none" stroke="#d1d5db" stroke-width="1.8" stroke-linecap="round"><path d="M385.8,148.7 L739.6,148.7 M731.5,143 L739.6,148.7 L731.5,154.4"/></g></svg>
<div class="a" style="left:735.2px;top:117.1px;width:33px;height:26.2px;border-radius:5px;background:#e0e7ff"></div>
<div class="a" style="left:772.2px;top:117.1px;width:32.7px;height:26.2px;border-radius:5px;background:#eef2ff"></div>
<svg class="a" style="left:0;top:0" width="1280" height="735"><g fill="none" stroke-width="1.5" stroke-linecap="round" stroke-linejoin="round"><path d="M756,130.5 L747.6,130.5 M751.4,126.8 L747.6,130.5 L751.4,134.2" stroke="#1e293b"/><path d="M784,130.5 L792.4,130.5 M788.6,126.8 L792.4,130.5 L788.6,134.2" stroke="#94a3b8"/></g></svg>
<div class="a" style="left:760px;top:133.5px;width:14px;height:14px;border-radius:50%;background:#f92f45;box-shadow:0 1px 3px rgba(0,0,0,0.2)"></div>
<div class="a" style="left:388.7px;top:158.9px;width:11.2px;height:11.2px;border-radius:50%;background:#ecc94b"></div>
<div class="a" style="left:451.4px;top:158.9px;width:11.2px;height:11.2px;border-radius:50%;background:#48bb78"></div>
<div class="a" style="left:512.0px;top:158.9px;width:11.2px;height:11.2px;border-radius:50%;background:#e55d5d"></div>
<svg class="chart" width="1280" height="735" viewBox="0 0 1280 735" style="position:absolute;left:0;top:0">
<line x1="410.9" x2="795.8" y1="402.0" y2="402.0" stroke="#e5e5e5" stroke-width="1"/>
<text x="401.7" y="404.9" text-anchor="end" class="ct" style="font-size:10.1px">0</text>
<line x1="410.9" x2="795.8" y1="368.2" y2="368.2" stroke="#e5e5e5" stroke-width="1"/>
<text x="401.7" y="371.1" text-anchor="end" class="ct" style="font-size:10.1px">10</text>
<line x1="410.9" x2="795.8" y1="334.4" y2="334.4" stroke="#e5e5e5" stroke-width="1"/>
<text x="401.7" y="337.3" text-anchor="end" class="ct" style="font-size:10.1px">20</text>
<line x1="410.9" x2="795.8" y1="300.7" y2="300.7" stroke="#e5e5e5" stroke-width="1"/>
<text x="401.7" y="303.6" text-anchor="end" class="ct" style="font-size:10.1px">30</text>
<line x1="410.9" x2="795.8" y1="266.9" y2="266.9" stroke="#e5e5e5" stroke-width="1"/>
<text x="401.7" y="269.8" text-anchor="end" class="ct" style="font-size:10.1px">40</text>
<line x1="410.9" x2="795.8" y1="233.1" y2="233.1" stroke="#e5e5e5" stroke-width="1"/>
<text x="401.7" y="236.0" text-anchor="end" class="ct" style="font-size:10.1px">50</text>
<line x1="410.9" x2="795.8" y1="199.3" y2="199.3" stroke="#e5e5e5" stroke-width="1"/>
<text x="401.7" y="202.2" text-anchor="end" class="ct" style="font-size:10.1px">60</text>
<line x1="410.9" x2="410.9" y1="402" y2="408" stroke="#e5e5e5" stroke-width="1"/>
<line x1="418.8" x2="418.8" y1="402" y2="408" stroke="#e5e5e5" stroke-width="1"/>
<line x1="426.6" x2="426.6" y1="402" y2="408" stroke="#e5e5e5" stroke-width="1"/>
<line x1="434.5" x2="434.5" y1="402" y2="408" stroke="#e5e5e5" stroke-width="1"/>
<line x1="442.3" x2="442.3" y1="402" y2="408" stroke="#e5e5e5" stroke-width="1"/>
<line x1="450.2" x2="450.2" y1="402" y2="408" stroke="#e5e5e5" stroke-width="1"/>
<line x1="458.0" x2="458.0" y1="402" y2="408" stroke="#e5e5e5" stroke-width="1"/>
<line x1="465.9" x2="465.9" y1="402" y2="408" stroke="#e5e5e5" stroke-width="1"/>
<line x1="473.7" x2="473.7" y1="402" y2="408" stroke="#e5e5e5" stroke-width="1"/>
<line x1="481.6" x2="481.6" y1="402" y2="408" stroke="#e5e5e5" stroke-width="1"/>
<line x1="489.4" x2="489.4" y1="402" y2="408" stroke="#e5e5e5" stroke-width="1"/>
<line x1="497.3" x2="497.3" y1="402" y2="408" stroke="#e5e5e5" stroke-width="1"/>
<line x1="505.2" x2="505.2" y1="402" y2="408" stroke="#e5e5e5" stroke-width="1"/>
<line x1="513.0" x2="513.0" y1="402" y2="408" stroke="#e5e5e5" stroke-width="1"/>
<line x1="520.9" x2="520.9" y1="402" y2="408" stroke="#e5e5e5" stroke-width="1"/>
<line x1="528.7" x2="528.7" y1="402" y2="408" stroke="#e5e5e5" stroke-width="1"/>
<line x1="536.6" x2="536.6" y1="402" y2="408" stroke="#e5e5e5" stroke-width="1"/>
<line x1="544.4" x2="544.4" y1="402" y2="408" stroke="#e5e5e5" stroke-width="1"/>
<line x1="552.3" x2="552.3" y1="402" y2="408" stroke="#e5e5e5" stroke-width="1"/>
<line x1="560.1" x2="560.1" y1="402" y2="408" stroke="#e5e5e5" stroke-width="1"/>
<line x1="568.0" x2="568.0" y1="402" y2="408" stroke="#e5e5e5" stroke-width="1"/>
<line x1="575.9" x2="575.9" y1="402" y2="408" stroke="#e5e5e5" stroke-width="1"/>
<line x1="583.7" x2="583.7" y1="402" y2="408" stroke="#e5e5e5" stroke-width="1"/>
<line x1="591.6" x2="591.6" y1="402" y2="408" stroke="#e5e5e5" stroke-width="1"/>
<line x1="599.4" x2="599.4" y1="402" y2="408" stroke="#e5e5e5" stroke-width="1"/>
<line x1="607.3" x2="607.3" y1="402" y2="408" stroke="#e5e5e5" stroke-width="1"/>
<line x1="615.1" x2="615.1" y1="402" y2="408" stroke="#e5e5e5" stroke-width="1"/>
<line x1="623.0" x2="623.0" y1="402" y2="408" stroke="#e5e5e5" stroke-width="1"/>
<line x1="630.8" x2="630.8" y1="402" y2="408" stroke="#e5e5e5" stroke-width="1"/>
<line x1="638.7" x2="638.7" y1="402" y2="408" stroke="#e5e5e5" stroke-width="1"/>
<line x1="646.5" x2="646.5" y1="402" y2="408" stroke="#e5e5e5" stroke-width="1"/>
<line x1="654.4" x2="654.4" y1="402" y2="408" stroke="#e5e5e5" stroke-width="1"/>
<line x1="662.3" x2="662.3" y1="402" y2="408" stroke="#e5e5e5" stroke-width="1"/>
<line x1="670.1" x2="670.1" y1="402" y2="408" stroke="#e5e5e5" stroke-width="1"/>
<line x1="678.0" x2="678.0" y1="402" y2="408" stroke="#e5e5e5" stroke-width="1"/>
<line x1="685.8" x2="685.8" y1="402" y2="408" stroke="#e5e5e5" stroke-width="1"/>
<line x1="693.7" x2="693.7" y1="402" y2="408" stroke="#e5e5e5" stroke-width="1"/>
<line x1="701.5" x2="701.5" y1="402" y2="408" stroke="#e5e5e5" stroke-width="1"/>
<line x1="709.4" x2="709.4" y1="402" y2="408" stroke="#e5e5e5" stroke-width="1"/>
<line x1="717.2" x2="717.2" y1="402" y2="408" stroke="#e5e5e5" stroke-width="1"/>
<line x1="725.1" x2="725.1" y1="402" y2="408" stroke="#e5e5e5" stroke-width="1"/>
<line x1="733.0" x2="733.0" y1="402" y2="408" stroke="#e5e5e5" stroke-width="1"/>
<line x1="740.8" x2="740.8" y1="402" y2="408" stroke="#e5e5e5" stroke-width="1"/>
<line x1="748.7" x2="748.7" y1="402" y2="408" stroke="#e5e5e5" stroke-width="1"/>
<line x1="756.5" x2="756.5" y1="402" y2="408" stroke="#e5e5e5" stroke-width="1"/>
<line x1="764.4" x2="764.4" y1="402" y2="408" stroke="#e5e5e5" stroke-width="1"/>
<line x1="772.2" x2="772.2" y1="402" y2="408" stroke="#e5e5e5" stroke-width="1"/>
<line x1="780.1" x2="780.1" y1="402" y2="408" stroke="#e5e5e5" stroke-width="1"/>
<line x1="787.9" x2="787.9" y1="402" y2="408" stroke="#e5e5e5" stroke-width="1"/>
<line x1="795.8" x2="795.8" y1="402" y2="408" stroke="#e5e5e5" stroke-width="1"/>
<path d="M410.90,402.00 C414.83,402.00 414.83,402.00 418.75,402.00 C422.68,402.00 422.68,395.24 426.61,395.24 C430.54,395.24 430.54,395.24 434.46,395.24 C438.39,395.24 438.39,402.00 442.32,402.00 C446.25,402.00 446.25,402.00 450.17,402.00 C454.10,402.00 454.10,402.00 458.03,402.00 C461.96,402.00 461.96,402.00 465.88,402.00 C469.81,402.00 469.81,402.00 473.74,402.00 C477.67,402.00 477.67,402.00 481.59,402.00 C485.52,402.00 485.52,402.00 489.45,402.00 C493.38,402.00 493.38,402.00 497.30,402.00 C501.23,402.00 501.23,402.00 505.16,402.00 C509.09,402.00 509.09,402.00 513.01,402.00 C516.94,402.00 516.94,402.00 520.87,402.00 C524.80,402.00 524.80,402.00 528.73,402.00 C532.65,402.00 532.65,402.00 536.58,402.00 C540.51,402.00 540.51,402.00 544.43,402.00 C548.36,402.00 548.36,402.00 552.29,402.00 C556.22,402.00 556.22,402.00 560.14,402.00 C564.07,402.00 564.07,395.24 568.00,395.24 C571.93,395.24 571.93,402.00 575.86,402.00 C579.78,402.00 579.78,402.00 583.71,402.00 C587.64,402.00 587.64,402.00 591.57,402.00 C595.49,402.00 595.49,402.00 599.42,402.00 C603.35,402.00 603.35,402.00 607.27,402.00 C611.20,402.00 611.20,402.00 615.13,402.00 C619.06,402.00 619.06,402.00 622.99,402.00 C626.91,402.00 626.91,402.00 630.84,402.00 C634.77,402.00 634.77,402.00 638.69,402.00 C642.62,402.00 642.62,402.00 646.55,402.00 C650.48,402.00 650.48,402.00 654.40,402.00 C658.33,402.00 658.33,402.00 662.26,402.00 C666.19,402.00 666.19,402.00 670.12,402.00 C674.04,402.00 674.04,402.00 677.97,402.00 C681.90,402.00 681.90,402.00 685.83,402.00 C689.75,402.00 689.75,402.00 693.68,402.00 C697.61,402.00 697.61,402.00 701.53,402.00 C705.46,402.00 705.46,402.00 709.39,402.00 C713.32,402.00 713.32,402.00 717.25,402.00 C721.17,402.00 721.17,402.00 725.10,402.00 C729.03,402.00 729.03,402.00 732.95,402.00 C736.88,402.00 736.88,402.00 740.81,402.00 C744.74,402.00 744.74,402.00 748.66,402.00 C752.59,402.00 752.59,402.00 756.52,402.00 C760.45,402.00 760.45,402.00 764.38,402.00 C768.30,402.00 768.30,402.00 772.23,402.00 C776.16,402.00 776.16,402.00 780.09,402.00 C784.01,402.00 784.01,402.00 787.94,402.00 C791.87,402.00 791.87,402.00 795.80,402.00" fill="none" stroke="rgba(236,199,72,0.85)" stroke-width="4.5" stroke-linejoin="round"/>
<path d="M410.90,381.73 C414.83,381.73 414.83,358.09 418.75,358.09 C422.68,358.09 422.68,327.68 426.61,327.68 C430.54,327.68 430.54,310.79 434.46,310.79 C438.39,310.79 438.39,324.31 442.32,324.31 C446.25,324.31 446.25,358.09 450.17,358.09 C454.10,358.09 454.10,368.22 458.03,368.22 C461.96,368.22 461.96,378.35 465.88,378.35 C469.81,378.35 469.81,385.11 473.74,385.11 C477.67,385.11 477.67,273.64 481.59,273.64 C485.52,273.64 485.52,381.73 489.45,381.73 C493.38,381.73 493.38,317.55 497.30,317.55 C501.23,317.55 501.23,202.70 505.16,202.70 C509.09,202.70 509.09,324.31 513.01,324.31 C516.94,324.31 516.94,378.35 520.87,378.35 C524.80,378.35 524.80,381.73 528.73,381.73 C532.65,381.73 532.65,358.09 536.58,358.09 C540.51,358.09 540.51,256.75 544.43,256.75 C548.36,256.75 548.36,358.09 552.29,358.09 C556.22,358.09 556.22,212.83 560.14,212.83 C564.07,212.83 564.07,287.15 568.00,287.15 C571.93,287.15 571.93,358.09 575.86,358.09 C579.78,358.09 579.78,277.01 583.71,277.01 C587.64,277.01 587.64,358.09 591.57,358.09 C595.49,358.09 595.49,385.11 599.42,385.11 C603.35,385.11 603.35,347.95 607.27,347.95 C611.20,347.95 611.20,358.09 615.13,358.09 C619.06,358.09 619.06,368.22 622.99,368.22 C626.91,368.22 626.91,398.62 630.84,398.62 C634.77,398.62 634.77,398.62 638.69,398.62 C642.62,398.62 642.62,402.00 646.55,402.00 C650.48,402.00 650.48,402.00 654.40,402.00 C658.33,402.00 658.33,260.12 662.26,260.12 C666.19,260.12 666.19,354.71 670.12,354.71 C674.04,354.71 674.04,260.12 677.97,260.12 C681.90,260.12 681.90,378.35 685.83,378.35 C689.75,378.35 689.75,388.49 693.68,388.49 C697.61,388.49 697.61,381.73 701.53,381.73 C705.46,381.73 705.46,385.11 709.39,385.11 C713.32,385.11 713.32,381.73 717.25,381.73 C721.17,381.73 721.17,331.06 725.10,331.06 C729.03,331.06 729.03,351.33 732.95,351.33 C736.88,351.33 736.88,337.82 740.81,337.82 C744.74,337.82 744.74,290.53 748.66,290.53 C752.59,290.53 752.59,358.09 756.52,358.09 C760.45,358.09 760.45,368.22 764.38,368.22 C768.30,368.22 768.30,398.62 772.23,398.62 C776.16,398.62 776.16,371.60 780.09,371.60 C784.01,371.60 784.01,249.99 787.94,249.99 C791.87,249.99 791.87,320.93 795.80,320.93" fill="none" stroke="rgba(75,180,115,0.82)" stroke-width="4.5" stroke-linejoin="round"/>
<path d="M410.90,395.24 C414.83,395.24 414.83,374.98 418.75,374.98 C422.68,374.98 422.68,381.73 426.61,381.73 C430.54,381.73 430.54,368.22 434.46,368.22 C438.39,368.22 438.39,378.35 442.32,378.35 C446.25,378.35 446.25,374.98 450.17,374.98 C454.10,374.98 454.10,395.24 458.03,395.24 C461.96,395.24 461.96,402.00 465.88,402.00 C469.81,402.00 469.81,402.00 473.74,402.00 C477.67,402.00 477.67,398.62 481.59,398.62 C485.52,398.62 485.52,398.62 489.45,398.62 C493.38,398.62 493.38,385.11 497.30,385.11 C501.23,385.11 501.23,368.22 505.16,368.22 C509.09,368.22 509.09,378.35 513.01,378.35 C516.94,378.35 516.94,402.00 520.87,402.00 C524.80,402.00 524.80,398.62 528.73,398.62 C532.65,398.62 532.65,374.98 536.58,374.98 C540.51,374.98 540.51,314.17 544.43,314.17 C548.36,314.17 548.36,374.98 552.29,374.98 C556.22,374.98 556.22,358.09 560.14,358.09 C564.07,358.09 564.07,378.35 568.00,378.35 C571.93,378.35 571.93,374.98 575.86,374.98 C579.78,374.98 579.78,293.90 583.71,293.90 C587.64,293.90 587.64,374.98 591.57,374.98 C595.49,374.98 595.49,395.24 599.42,395.24 C603.35,395.24 603.35,354.71 607.27,354.71 C611.20,354.71 611.20,374.98 615.13,374.98 C619.06,374.98 619.06,395.24 622.99,395.24 C626.91,395.24 626.91,395.24 630.84,395.24 C634.77,395.24 634.77,395.24 638.69,395.24 C642.62,395.24 642.62,398.62 646.55,398.62 C650.48,398.62 650.48,398.62 654.40,398.62 C658.33,398.62 658.33,398.62 662.26,398.62 C666.19,398.62 666.19,402.00 670.12,402.00 C674.04,402.00 674.04,398.62 677.97,398.62 C681.90,398.62 681.90,402.00 685.83,402.00 C689.75,402.00 689.75,402.00 693.68,402.00 C697.61,402.00 697.61,402.00 701.53,402.00 C705.46,402.00 705.46,402.00 709.39,402.00 C713.32,402.00 713.32,398.62 717.25,398.62 C721.17,398.62 721.17,371.60 725.10,371.60 C729.03,371.60 729.03,381.73 732.95,381.73 C736.88,381.73 736.88,364.84 740.81,364.84 C744.74,364.84 744.74,381.73 748.66,381.73 C752.59,381.73 752.59,374.98 756.52,374.98 C760.45,374.98 760.45,395.24 764.38,395.24 C768.30,395.24 768.30,395.24 772.23,395.24 C776.16,395.24 776.16,364.84 780.09,364.84 C784.01,364.84 784.01,320.93 787.94,320.93 C791.87,320.93 791.87,381.73 795.80,381.73" fill="none" stroke="rgba(232,95,95,0.8)" stroke-width="4.5" stroke-linejoin="round"/>
<defs><clipPath id="mc"><rect x="373.5" y="380" width="440" height="80"/></clipPath></defs><g clip-path="url(#mc)">
<text x="414.1" y="413.5" text-anchor="end" class="ct" style="font-size:10.6px" transform="rotate(-47 414.1 413.5)">07/30/2024</text>
<text x="429.8" y="413.5" text-anchor="end" class="ct" style="font-size:10.6px" transform="rotate(-47 429.8 413.5)">08/01/2024</text>
<text x="445.5" y="413.5" text-anchor="end" class="ct" style="font-size:10.6px" transform="rotate(-47 445.5 413.5)">08/01/2024</text>
<text x="461.2" y="413.5" text-anchor="end" class="ct" style="font-size:10.6px" transform="rotate(-47 461.2 413.5)">08/01/2024</text>
<text x="476.9" y="413.5" text-anchor="end" class="ct" style="font-size:10.6px" transform="rotate(-47 476.9 413.5)">08/01/2024</text>
<text x="492.6" y="413.5" text-anchor="end" class="ct" style="font-size:10.6px" transform="rotate(-47 492.6 413.5)">08/01/2024</text>
<text x="508.4" y="413.5" text-anchor="end" class="ct" style="font-size:10.6px" transform="rotate(-47 508.4 413.5)">08/01/2024</text>
<text x="524.1" y="413.5" text-anchor="end" class="ct" style="font-size:10.6px" transform="rotate(-47 524.1 413.5)">08/01/2024</text>
<text x="539.8" y="413.5" text-anchor="end" class="ct" style="font-size:10.6px" transform="rotate(-47 539.8 413.5)">08/01/2024</text>
<text x="555.5" y="413.5" text-anchor="end" class="ct" style="font-size:10.6px" transform="rotate(-47 555.5 413.5)">08/02/2024</text>
<text x="571.2" y="413.5" text-anchor="end" class="ct" style="font-size:10.6px" transform="rotate(-47 571.2 413.5)">08/02/2024</text>
<text x="586.9" y="413.5" text-anchor="end" class="ct" style="font-size:10.6px" transform="rotate(-47 586.9 413.5)">08/03/2024</text>
<text x="602.6" y="413.5" text-anchor="end" class="ct" style="font-size:10.6px" transform="rotate(-47 602.6 413.5)">08/03/2024</text>
<text x="618.3" y="413.5" text-anchor="end" class="ct" style="font-size:10.6px" transform="rotate(-47 618.3 413.5)">08/03/2024</text>
<text x="634.0" y="413.5" text-anchor="end" class="ct" style="font-size:10.6px" transform="rotate(-47 634.0 413.5)">08/03/2024</text>
<text x="649.8" y="413.5" text-anchor="end" class="ct" style="font-size:10.6px" transform="rotate(-47 649.8 413.5)">08/03/2024</text>
<text x="665.5" y="413.5" text-anchor="end" class="ct" style="font-size:10.6px" transform="rotate(-47 665.5 413.5)">08/03/2024</text>
<text x="681.2" y="413.5" text-anchor="end" class="ct" style="font-size:10.6px" transform="rotate(-47 681.2 413.5)">08/03/2024</text>
<text x="696.9" y="413.5" text-anchor="end" class="ct" style="font-size:10.6px" transform="rotate(-47 696.9 413.5)">08/03/2024</text>
<text x="712.6" y="413.5" text-anchor="end" class="ct" style="font-size:10.6px" transform="rotate(-47 712.6 413.5)">08/03/2024</text>
<text x="728.3" y="413.5" text-anchor="end" class="ct" style="font-size:10.6px" transform="rotate(-47 728.3 413.5)">08/03/2024</text>
<text x="744.0" y="413.5" text-anchor="end" class="ct" style="font-size:10.6px" transform="rotate(-47 744.0 413.5)">08/03/2024</text>
<text x="759.7" y="413.5" text-anchor="end" class="ct" style="font-size:10.6px" transform="rotate(-47 759.7 413.5)">08/03/2024</text>
<text x="775.4" y="413.5" text-anchor="end" class="ct" style="font-size:10.6px" transform="rotate(-47 775.4 413.5)">08/03/2024</text>
<text x="791.1" y="413.5" text-anchor="end" class="ct" style="font-size:10.6px" transform="rotate(-47 791.1 413.5)">08/03/2024</text>
</g></svg>
<div class="a" style="left:366px;top:103px;width:449.2px;height:361px;border:2.4px solid #f92f45;border-radius:1.5px;box-shadow:0 2px 7px rgba(0,0,0,0.07)"></div>
<div class="a" style="left:89px;top:512.3px;width:183.3px;height:40.5px;border:2.4px solid #f92f45;border-radius:1.5px;box-shadow:0 2px 7px rgba(0,0,0,0.07)"></div>
<div class="a" style="left:263px;top:543px;width:14px;height:14px;border-radius:50%;background:#f92f45;box-shadow:0 1px 3px rgba(0,0,0,0.2)"></div>
<div class="a" style="left:292.2px;top:60.4px;width:52.8px;height:66.6px;border-radius:8px 0 0 8px;background:#e0e7ff;box-shadow:-2px 3px 8px rgba(0,0,0,0.08)"></div>
<svg class="a" style="left:312.5px;top:78.5px" width="12" height="12" viewBox="0 0 12 12"><path d="M1,1 L11,11 M11,1 L1,11" stroke="#64748b" stroke-width="1.4"/></svg>
<div class="a" style="left:667.00px;width:200px;text-align:center;top:135.00px;font-size:10px;font-weight:700;color:#fff;letter-spacing:0px;">2</div>
<div class="a" style="left:385.00px;top:123.00px;font-size:12px;font-weight:700;color:#262626;letter-spacing:0px;transform:scaleX(0.8745);transform-origin:left 0;">1 - 50 runs</div>
<div class="a" style="left:402.40px;top:159.00px;font-size:11.8px;font-weight:400;color:#474747;letter-spacing:0px;transform:scaleX(0.9287);transform-origin:left 0;">Skipped</div>
<div class="a" style="left:465.80px;top:159.00px;font-size:11.8px;font-weight:400;color:#474747;letter-spacing:0px;transform:scaleX(0.9299);transform-origin:left 0;">Passed</div>
<div class="a" style="left:526.20px;top:159.00px;font-size:11.8px;font-weight:400;color:#474747;letter-spacing:0px;transform:scaleX(0.9147);transform-origin:left 0;">Failed</div>
<div class="a" style="left:170.00px;width:200px;text-align:center;top:545.00px;font-size:10px;font-weight:700;color:#fff;letter-spacing:0px;">1</div>
<div class="a" style="left:218.50px;width:200px;text-align:center;top:101.00px;font-size:11px;font-weight:400;color:#64748b;letter-spacing:0px;">[Esc]</div>
</body></html>
